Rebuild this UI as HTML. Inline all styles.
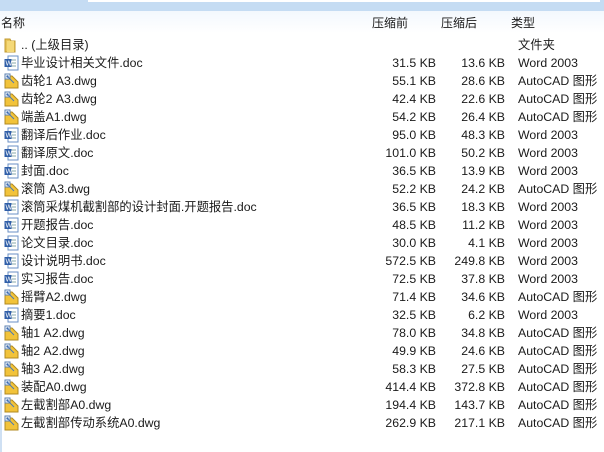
<!DOCTYPE html>
<html><head><meta charset="utf-8"><style>
body{margin:0;width:604px;height:452px;overflow:hidden;background:#fff;font-family:"Liberation Sans","Noto Sans CJK SC",sans-serif;font-size:12.3px;color:#1a1a1a;position:relative}
.top{position:absolute;left:0;top:0;width:604px;height:11px;background:#c5dcf3}
.top2{position:absolute;left:88px;top:0;width:512px;height:2px;background:#fff}
.hdr{position:absolute;left:0;top:11px;width:604px;height:22px;background:linear-gradient(#f3f8fd,#fff)}
.h{position:absolute;top:14px;font-size:12px}
.row{position:absolute;left:0;height:18px;width:604px;line-height:18px}
.ic{position:absolute;left:4px;top:1px;width:15px;height:16px}
.n{position:absolute;left:21px}
.a{position:absolute;right:168px}
.b{position:absolute;right:99px}
.t{position:absolute;left:518px;white-space:nowrap}
.lb{position:absolute;left:0;top:390px;width:2px;height:62px;background:#cfe0f3}
</style></head><body>
<div class="top"></div><div class="top2"></div><div class="hdr"></div>
<div class="h" style="left:1px">名称</div>
<div class="h" style="left:372px">压缩前</div>
<div class="h" style="left:441px">压缩后</div>
<div class="h" style="left:511px">类型</div>
<div class="lb"></div>
<div id="rows"></div>
<script>
const W='<svg class="ic" viewBox="0 0 15 16"><rect x="4" y="1" width="10" height="14" fill="#fff" stroke="#6a8fc4"/><line x1="7" y1="5" x2="12" y2="5" stroke="#8aa"/><line x1="7" y1="8" x2="12" y2="8" stroke="#8aa"/><line x1="7" y1="11" x2="12" y2="11" stroke="#8aa"/><rect x="0.5" y="4" width="7" height="8" fill="#2f5ea8"/><text x="1.5" y="10.5" font-size="7" fill="#fff" font-family="Liberation Sans">W</text></svg>';
const D='<svg class="ic" viewBox="0 0 15 16"><path d="M1 3 L8 3 L14 9 L14 15 L1 15 Z" fill="#f2c33a" stroke="#b08a20"/><path d="M1 1 L6 1 L6 6 L1 6Z" fill="#fff" stroke="#5a7fb0"/><circle cx="3.5" cy="3.5" r="1.2" fill="#3a6ab0"/><line x1="4" y1="4" x2="10" y2="10" stroke="#4a78b8"/></svg>';
const F='<svg class="ic" viewBox="0 0 15 16"><path d="M1 2 L6 2 L7 4 L11 4 L11 15 L1 15Z" fill="#e8c45a" stroke="#c09a30"/><rect x="3" y="4" width="7" height="11" fill="#f5d978"/></svg>';
const rows=[
[F,'.. (上级目录)','','','文件夹'],
[W,'毕业设计相关文件.doc','31.5 KB','13.6 KB','Word 2003'],
[D,'齿轮1 A3.dwg','55.1 KB','28.6 KB','AutoCAD 图形'],
[D,'齿轮2 A3.dwg','42.4 KB','22.6 KB','AutoCAD 图形'],
[D,'端盖A1.dwg','54.2 KB','26.4 KB','AutoCAD 图形'],
[W,'翻译后作业.doc','95.0 KB','48.3 KB','Word 2003'],
[W,'翻译原文.doc','101.0 KB','50.2 KB','Word 2003'],
[W,'封面.doc','36.5 KB','13.9 KB','Word 2003'],
[D,'滚筒 A3.dwg','52.2 KB','24.2 KB','AutoCAD 图形'],
[W,'滚筒采煤机截割部的设计封面.开题报告.doc','36.5 KB','18.3 KB','Word 2003'],
[W,'开题报告.doc','48.5 KB','11.2 KB','Word 2003'],
[W,'论文目录.doc','30.0 KB','4.1 KB','Word 2003'],
[W,'设计说明书.doc','572.5 KB','249.8 KB','Word 2003'],
[W,'实习报告.doc','72.5 KB','37.8 KB','Word 2003'],
[D,'摇臂A2.dwg','71.4 KB','34.6 KB','AutoCAD 图形'],
[W,'摘要1.doc','32.5 KB','6.2 KB','Word 2003'],
[D,'轴1 A2.dwg','78.0 KB','34.8 KB','AutoCAD 图形'],
[D,'轴2 A2.dwg','49.9 KB','24.6 KB','AutoCAD 图形'],
[D,'轴3 A2.dwg','58.3 KB','27.5 KB','AutoCAD 图形'],
[D,'装配A0.dwg','414.4 KB','372.8 KB','AutoCAD 图形'],
[D,'左截割部A0.dwg','194.4 KB','143.7 KB','AutoCAD 图形'],
[D,'左截割部传动系统A0.dwg','262.9 KB','217.1 KB','AutoCAD 图形']];
let h='';rows.forEach((r,i)=>{h+=`<div class="row" style="top:${36+18*i}px">${r[0]}<span class="n">${r[1]}</span><span class="a">${r[2]}</span><span class="b">${r[3]}</span><span class="t">${r[4]}</span></div>`});
document.getElementById('rows').innerHTML=h;
</script>
</body></html>
